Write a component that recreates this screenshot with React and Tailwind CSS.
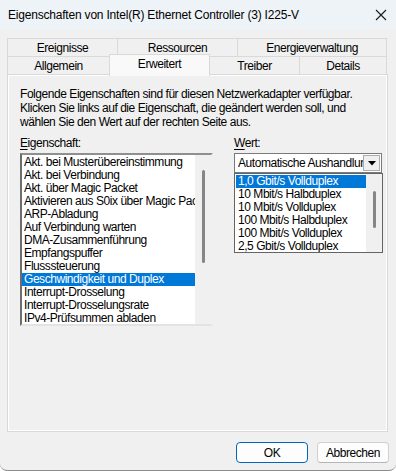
import React from "react";

const props = [
  "Akt. bei Musterübereinstimmung",
  "Akt. bei Verbindung",
  "Akt. über Magic Packet",
  "Aktivieren aus S0ix über Magic Packet",
  "ARP-Abladung",
  "Auf Verbindung warten",
  "DMA-Zusammenführung",
  "Empfangspuffer",
  "Flusssteuerung",
  "Geschwindigkeit und Duplex",
  "Interrupt-Drosselung",
  "Interrupt-Drosselungsrate",
  "IPv4-Prüfsummen abladen",
];

const values = [
  "1,0 Gbit/s Vollduplex",
  "10 Mbit/s Halbduplex",
  "10 Mbit/s Vollduplex",
  "100 Mbit/s Halbduplex",
  "100 Mbit/s Vollduplex",
  "2,5 Gbit/s Vollduplex",
];

function Tab({ w, children, last }) {
  return (
    <div
      style={{ width: w }}
      className={`h-[18px] flex items-center justify-center border-t border-l border-[#d9d9d9] bg-[#f0f0f0] ${last ? "border-r" : ""}`}
    >
      {children}
    </div>
  );
}

export default function App() {
  return (
    <div className="w-[396px] h-[471px] bg-[#f0f0f0] flex flex-col overflow-hidden rounded-b-[7px] border-b border-[#8c8c8c] font-['Liberation_Sans',Arial,sans-serif] text-[12px] text-black tracking-[-0.45px] leading-[14px]">
      {/* Title bar */}
      <div className="h-[30px] shrink-0 bg-[#eef3f7] flex items-center justify-between pl-[8px] pr-[8px]">
        <span className="text-[12px] tracking-[-0.2px]">
          Eigenschaften von Intel(R) Ethernet Controller (3) I225-V
        </span>
        <svg width="12" height="12" viewBox="0 0 12 12" className="mr-[1px]">
          <path d="M1 1 L11 11 M11 1 L1 11" stroke="#1a1a1a" strokeWidth="1.1" fill="none" />
        </svg>
      </div>

      {/* Tabs */}
      <div className="mt-[8px] ml-[7px] flex">
        <Tab w={110}>Ereignisse</Tab>
        <Tab w={120}>Ressourcen</Tab>
        <Tab w={150} last>Energieverwaltung</Tab>
      </div>
      <div className="ml-[7px] flex h-[18px] items-start">
        <Tab w={102}>Allgemein</Tab>
        <div className="relative z-10 -mt-[2px] h-[22px] w-[101px] flex items-center justify-center pb-[3px] border-t border-l border-r border-[#d9d9d9] bg-[#f9f9f9]">
          Erweitert
        </div>
        <div className="w-[89px] h-[18px] flex items-center justify-center border-t border-[#d9d9d9] bg-[#f0f0f0]">
          Treiber
        </div>
        <Tab w={88} last>Details</Tab>
      </div>

      {/* Panel */}
      <div className="ml-[7px] w-[381px] h-[358px] border border-[#d9d9d9] shadow-[inset_1px_1px_0_#ffffff,inset_-1px_-1px_0_#ffffff] bg-[#f0f0f0] pl-[12px] pt-[12px]">
        <p className="leading-[14px]">
          Folgende Eigenschaften sind für diesen Netzwerkadapter verfügbar.
          <br />
          Klicken Sie links auf die Eigenschaft, die geändert werden soll, und
          <br />
          wählen Sie den Wert auf der rechten Seite aus.
        </p>

        <div className="mt-[7px] flex gap-[21px]">
          {/* Left column */}
          <div className="w-[193px] flex flex-col">
            <div className="h-[14px] leading-[14px]">
              <span className="underline underline-offset-[2px]">E</span>igenschaft:
            </div>
            <div className="mt-[3px] h-[173px] flex border-2 border-t-[#8f8f8f] border-l-[#6d6d6d] border-r-[#f0f0f0] border-b-[#e3e3e3] bg-white">
              <div className="w-[173px] pt-px overflow-hidden">
                {props.map((p) => (
                  <div
                    key={p}
                    className={`h-[13px] leading-[13px] pl-[2px] whitespace-nowrap ${p === "Geschwindigkeit und Duplex" ? "bg-[#0078d7] text-white" : ""}`}
                  >
                    {p}
                  </div>
                ))}
              </div>
              <div className="w-[16px] bg-[#f0f0f0] flex justify-center pt-[15px]">
                <div className="w-[3px] h-[93px] rounded-full bg-[#868686]" />
              </div>
            </div>
          </div>

          {/* Right column */}
          <div className="w-[149px] flex flex-col">
            <div className="h-[14px] leading-[14px]">
              <span className="underline underline-offset-[2px]">W</span>ert:
            </div>
            <div className="mt-[3px] w-[148px] h-[20px] flex items-center border border-[#7a7a7a] bg-white pl-[3px] pr-px">
              <div className="flex-1 overflow-hidden whitespace-nowrap">
                Automatische Aushandlung
              </div>
              <div className="w-[17px] h-[16px] flex items-center justify-center border border-[#adadad] bg-[#f0f0f0]">
                <svg width="8" height="5" viewBox="0 0 8 5">
                  <path d="M0 0 L8 0 L4 4.5 Z" fill="#000" />
                </svg>
              </div>
            </div>
            <div className="h-[80px] flex border border-[#646464] bg-white overflow-hidden">
              <div className="w-[131px] pl-px pt-px">
                {values.map((v, i) => (
                  <div
                    key={v}
                    className={`h-[13px] leading-[13px] pl-[2px] whitespace-nowrap ${i === 0 ? "bg-[#0078d7] text-white" : ""}`}
                  >
                    {v}
                  </div>
                ))}
              </div>
              <div className="w-[16px] bg-[#f0f0f0] flex justify-center pt-[17px]">
                <div className="w-[3px] h-[37px] rounded-full bg-[#868686]" />
              </div>
            </div>
          </div>
        </div>
      </div>

      {/* Buttons */}
      <div className="mt-[10px] flex justify-end gap-[9px] pr-[7px]">
        <button className="w-[72px] h-[21px] rounded-[4px] border border-[#0067c0] bg-[#fdfdfd] text-[12px] flex items-center justify-center">
          OK
        </button>
        <button className="w-[72px] h-[21px] rounded-[4px] border border-[#d0d0d0] border-b-[#b5b5b5] bg-[#fdfdfd] text-[12px] flex items-center justify-center">
          Abbrechen
        </button>
      </div>
    </div>
  );
}
